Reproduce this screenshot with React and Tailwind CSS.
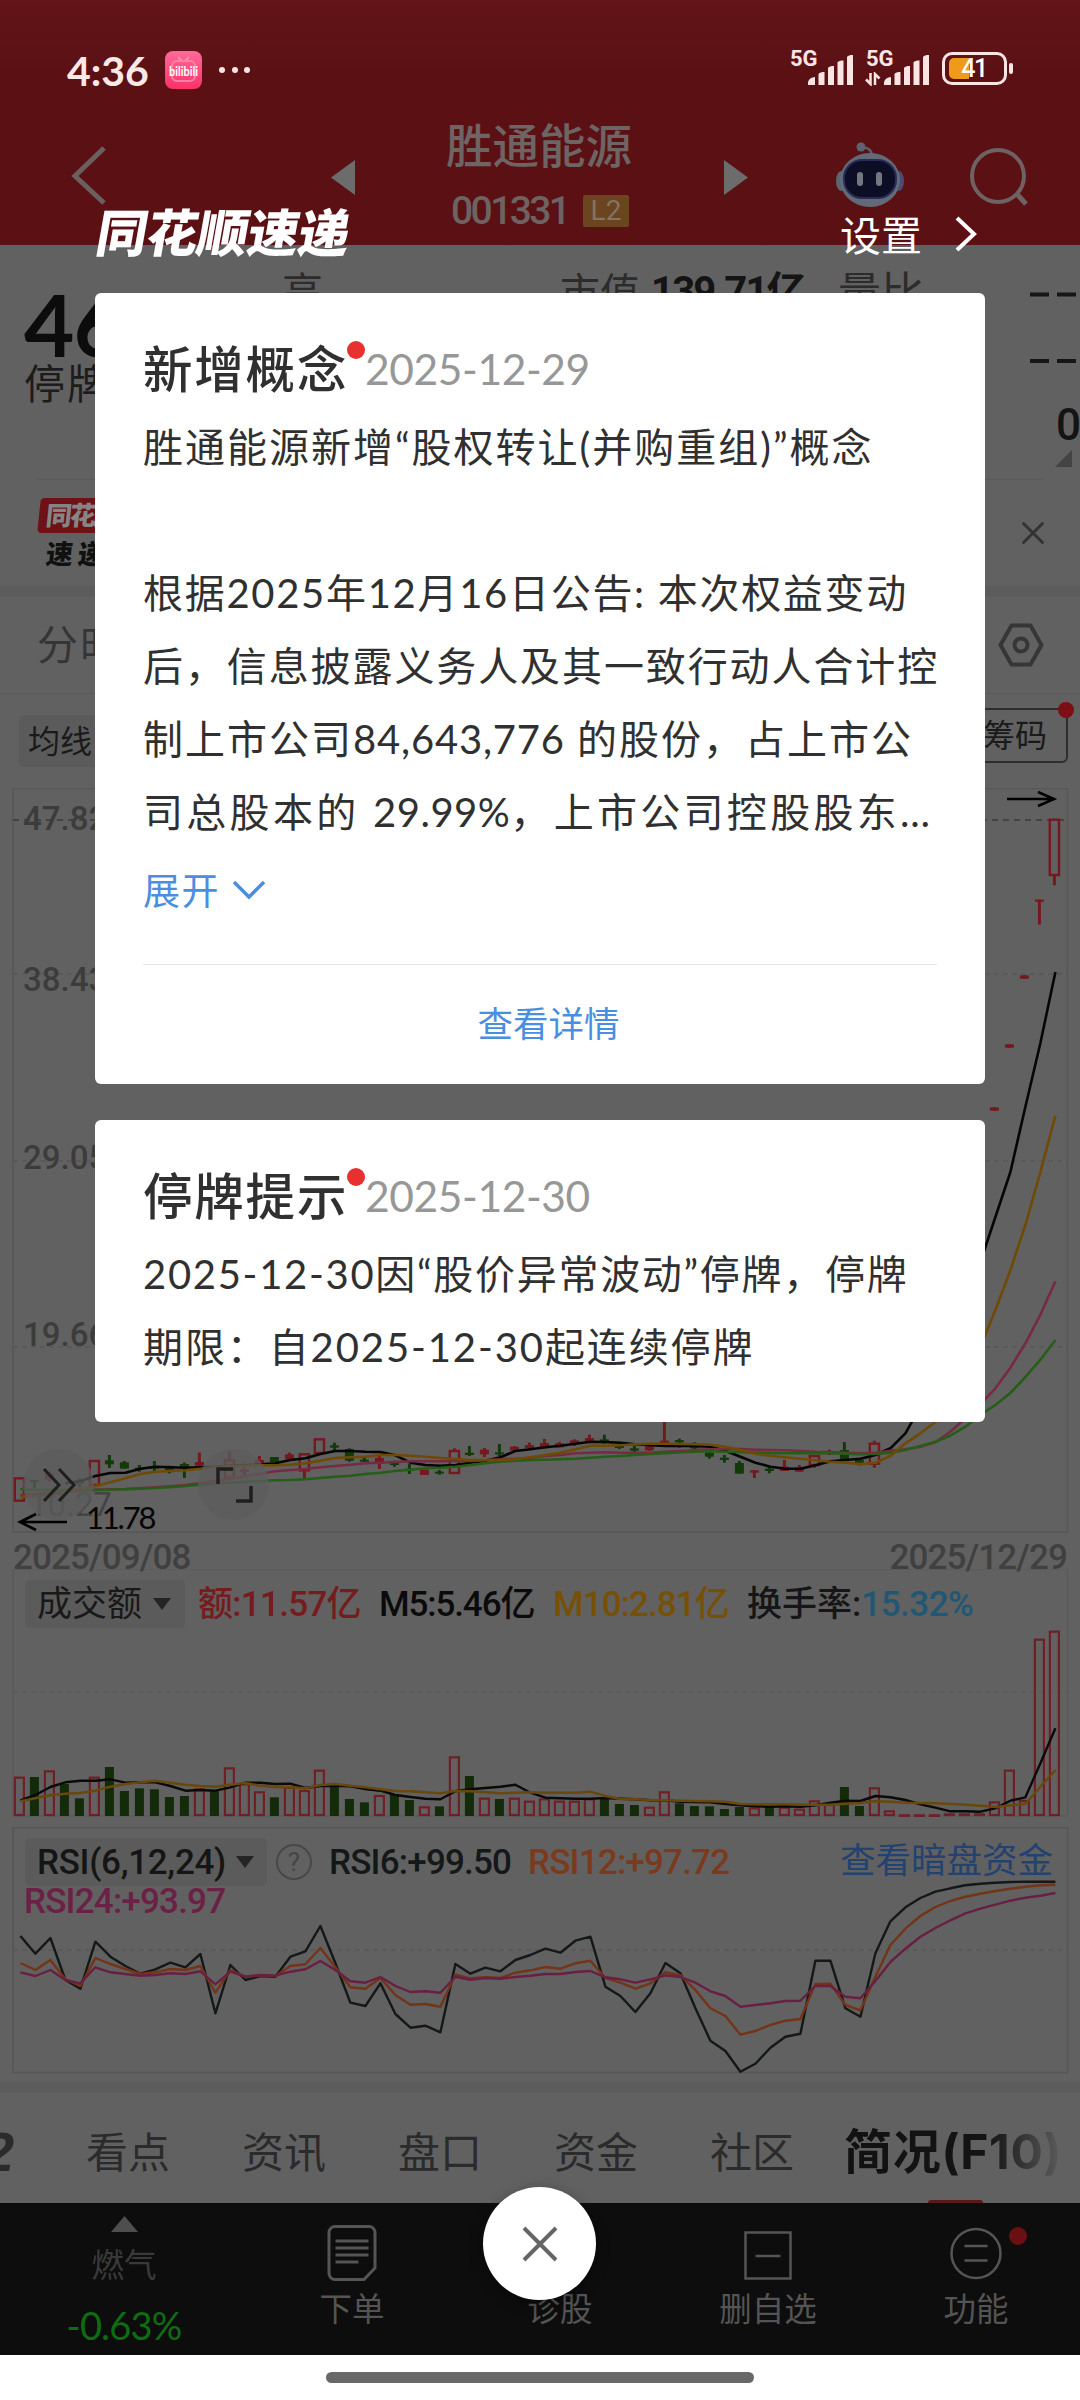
import { X } from "lucide-react";

const BAR_COUNT = 70;
const xAt = (i) => 19.4 + i * 15;

// All series below are stored in thirds of a pixel, relative to their panel base.
const MAIN_BASE = 1400;
const SUB_BASE = 1580;

const MA5 = [
  null, null, null, 250, 243, 228, 219, 218, 206, 200, 202, 203, 202, 200, 197, 196, 193, 190, 180, 175, 162, 153, 153,
  155, 156, 166, 188, 195, 197, 195, 188, 182, 172, 153, 148, 142, 137, 131, 125, 126, 128, 133, 136, 138, 138, 138,
  140, 152, 170, 188, 200, 206, 206, 196, 184, 180, 176, 165, 145, 100, 20, -80, -180, -290, -414, -549, -684, -880,
  -1071, -1284,
];
const MA10 = [
  292, 288, 282, 275, 268, 258, 247, 235, 222, 215, 213, 211, 206, 202, 198, 197, 196, 196, 194, 190, 182, 174, 172,
  170, 165, 165, 167, 170, 174, 177, 180, 180, 180, 178, 172, 165, 158, 148, 137, 137, 136, 133, 131, 131, 132, 133,
  134, 140, 150, 161, 167, 172, 176, 181, 185, 188, 192, 188, 168, 130, 100, 66, 15, -60, -160, -270, -390, -525,
  -684, -853,
];
const MA20 = [
  285, 282, 279, 276, 272, 269, 268, 267, 265, 262, 259, 255, 250, 243, 236, 229, 221, 214, 210, 207, 202, 198, 194,
  190, 188, 186, 184, 184, 184, 183, 183, 181, 178, 176, 173, 168, 165, 160, 158, 157, 158, 158, 158, 155, 153, 150,
  148, 146, 147, 149, 150, 151, 153, 155, 156, 158, 160, 158, 152, 148, 140, 127, 95, 55, 12, -35, -97, -170, -256,
  -356,
];
const MA60 = [
  268, 269, 270, 270, 270, 270, 269, 268, 266, 264, 262, 258, 254, 251, 248, 245, 243, 241, 240, 238, 234, 230, 227,
  222, 218, 213, 209, 205, 203, 200, 195, 190, 185, 182, 180, 179, 178, 176, 173, 170, 168, 165, 162, 160, 157, 155,
  154, 155, 156, 158, 159, 160, 160, 160, 160, 161, 163, 162, 158, 150, 138, 125, 107, 80, 45, 15, -21, -69, -121,
  -180,
];

// [index, kind, high, bodyTop, bodyBottom, low] where kind is r (up), R (up, hollow), g (down)
const CANDLES = [
  [0, "R", 232, 232, 305, 305], [1, "g", 240, 240, 246, 265], [2, "r", 215, 220, 238, 245], [4, "g", 235, 245, 250, 262],
  [5, "R", 180, 180, 258, 258], [6, "g", 165, 181, 193, 204], [7, "g", 183, 187, 206, 206], [8, "g", 195, 203, 207, 215],
  [9, "g", 183, 200, 206, 216], [10, "g", 197, 204, 208, 220], [11, "g", 188, 192, 204, 234], [12, "r", 158, 186, 197, 200],
  [14, "R", 155, 178, 236, 236], [15, "r", 190, 208, 216, 225], [16, "r", 168, 180, 192, 192], [17, "g", 171, 171, 186, 186],
  [18, "r", 158, 163, 178, 182], [19, "R", 160, 160, 214, 238], [20, "R", 115, 115, 162, 162], [21, "g", 128, 136, 143, 152],
  [22, "g", 145, 147, 182, 185], [23, "g", 172, 179, 183, 186], [24, "r", 168, 174, 192, 207], [25, "g", 182, 187, 195, 200],
  [26, "g", 192, 206, 211, 222], [27, "r", 209, 209, 225, 225], [28, "g", 210, 215, 220, 224], [29, "R", 145, 150, 222, 222],
  [30, "g", 138, 158, 165, 168], [31, "r", 144, 149, 163, 171], [32, "g", 132, 157, 163, 168], [33, "r", 138, 140, 152, 153],
  [34, "r", 128, 135, 144, 148], [35, "r", 117, 129, 142, 145], [36, "r", 126, 130, 142, 142], [37, "r", 118, 121, 132, 138],
  [38, "r", 104, 114, 123, 125], [39, "g", 104, 118, 128, 131], [40, "g", 134, 138, 144, 147], [41, "g", 138, 145, 152, 158],
  [42, "r", 137, 139, 151, 153], [43, "r", 45, 122, 130, 130], [44, "g", 116, 120, 127, 143], [45, "g", 127, 136, 145, 148],
  [46, "g", 152, 158, 170, 176], [47, "g", 165, 173, 180, 188], [48, "g", 183, 189, 221, 221], [49, "r", 210, 211, 218, 234],
  [50, "g", 198, 206, 213, 220], [51, "r", 180, 200, 213, 213], [52, "r", 195, 203, 215, 215], [53, "R", 165, 165, 198, 203],
  [54, "r", 149, 155, 163, 165], [55, "g", 126, 150, 180, 180], [56, "g", 175, 180, 191, 196], [57, "R", 122, 128, 194, 203],
  [65, "r", -878, -878, -868, -868], [66, "r", -1067, -1067, -1057, -1057], [67, "r", -1274, -1274, -1264, -1264],
  [68, "r", -1501, -1501, -1495, -1426], [69, "R", -1744, -1744, -1572, -1544],
];

const VOL_KINDS = "RGRGGRGGGGGGRGRRRGRRRGGGRGGRGRGRGRRRRRRGGGRRGGGGGRGRRRRGGRRRRRRRRRRRRR";
const VOL_TOPS = [
  590, 591, 571, 612, 655, 590, 561, 633, 625, 628, 651, 648, 625, 633, 562, 610, 634, 652, 620, 630, 569, 620, 657,
  667, 645, 643, 660, 679, 679, 529, 588, 653, 657, 653, 662, 655, 662, 662, 655, 655, 672, 675, 680, 634, 670, 678,
  679, 687, 681, 682, 681, 680, 686, 661, 672, 621, 678, 622, 691, 703, 703, 703, 700, 700, 700, 664, 569, 660, 176,
  152,
];
const VOL_M5 = [
  661, 645, 621, 607, 602, 602, 598, 608, 607, 607, 618, 632, 630, 632, 622, 608, 608, 612, 611, 624, 618, 617, 619,
  627, 632, 645, 651, 656, 658, 634, 628, 624, 620, 614, 638, 653, 655, 656, 656, 654, 656, 658, 661, 661, 665, 666,
  667, 672, 676, 679, 680, 679, 680, 676, 668, 662, 663, 648, 652, 660, 673, 683, 694, 694, 695, 685, 662, 652, 550,
  445,
];
const VOL_M10 = [
  664, 655, 646, 641, 639, 632, 620, 612, 607, 602, 608, 614, 618, 620, 614, 609, 617, 621, 622, 625, 615, 612, 617,
  622, 628, 633, 634, 637, 640, 633, 634, 637, 640, 638, 637, 638, 638, 638, 635, 648, 657, 658, 660, 661, 662, 663,
  664, 665, 672, 673, 673, 673, 674, 674, 674, 671, 669, 664, 665, 668, 669, 670, 672, 674, 677, 681, 676, 672, 620,
  570,
];

const RSI6 = [
  1068, 1121, 1074, 1200, 1226, 1085, 1130, 1158, 1181, 1168, 1148, 1162, 1122, 1300, 1155, 1200, 1188, 1190, 1130,
  1114, 1038, 1150, 1268, 1278, 1210, 1302, 1343, 1337, 1357, 1152, 1181, 1163, 1174, 1140, 1125, 1106, 1118, 1082,
  1070, 1220, 1248, 1296, 1240, 1149, 1180, 1285, 1382, 1413, 1475, 1451, 1403, 1370, 1361, 1142, 1142, 1285, 1310,
  1120, 1024, 982, 954, 935, 925, 916, 911, 908, 906, 905, 905, 905,
];
const RSI12 = [
  1149, 1170, 1140, 1198, 1218, 1134, 1152, 1167, 1182, 1177, 1167, 1170, 1158, 1238, 1170, 1190, 1186, 1188, 1158,
  1153, 1104, 1162, 1222, 1226, 1194, 1245, 1274, 1272, 1280, 1184, 1195, 1192, 1194, 1178, 1171, 1161, 1166, 1150,
  1142, 1194, 1208, 1226, 1210, 1177, 1186, 1230, 1285, 1308, 1364, 1353, 1335, 1322, 1317, 1212, 1211, 1275, 1291,
  1190, 1095, 1046, 1008, 981, 963, 950, 941, 933, 926, 920, 916, 914,
];
const RSI24 = [
  1177, 1188, 1170, 1200, 1210, 1162, 1177, 1182, 1187, 1185, 1180, 1182, 1174, 1213, 1175, 1190, 1185, 1187, 1175,
  1168, 1143, 1170, 1204, 1208, 1191, 1218, 1236, 1234, 1238, 1190, 1199, 1194, 1196, 1191, 1187, 1182, 1182, 1176,
  1173, 1192, 1198, 1208, 1198, 1186, 1191, 1208, 1234, 1248, 1280, 1275, 1270, 1263, 1262, 1218, 1218, 1250, 1255,
  1203, 1146, 1106, 1070, 1044, 1021, 1000, 986, 974, 962, 953, 947, 939,
];

const TABS = ["看点", "资讯", "盘口", "资金", "社区"];

function Series({ data, base, color, width = 2.4 }) {
  const points = data
    .map((v, i) => (v === null ? null : `${xAt(i) + 1},${(base + v / 3).toFixed(1)}`))
    .filter(Boolean)
    .join(" ");
  return <polyline points={points} fill="none" stroke={color} strokeWidth={width} strokeLinejoin="round" />;
}

function Candle({ row }) {
  const [i, kind, high, top, bottom, low] = row;
  const x = xAt(i);
  const y = (v) => MAIN_BASE + v / 3;
  const color = kind === "g" ? "#143a0b" : "#74191d";
  return (
    <g stroke={color} fill={color}>
      {kind === "R" ? (
        <>
          <rect x={x - 4.6} y={y(top) + 1} width={9.2} height={Math.max(y(bottom) - y(top) - 2, 2)} fill="none" strokeWidth={2.4} />
          <path d={`M${x} ${y(high)}V${y(top)}M${x} ${y(bottom)}V${y(low)}`} strokeWidth={3} />
        </>
      ) : (
        <>
          <rect x={x - 4.5} y={y(top)} width={9} height={Math.max(y(bottom) - y(top), 2)} stroke="none" />
          <path d={`M${x} ${y(high)}V${y(low)}`} strokeWidth={3} />
        </>
      )}
    </g>
  );
}

function SignalBars({ className }) {
  return (
    <svg className={className} width="46" height="32" viewBox="0 0 46 32" fill="#fbe4e4">
      <path d="M0 31v-3c1-3 3-4.500 7-5v8z" />
      <path d="M10.500 31V20c1-1.500 3-2 6-2v13z" />
      <path d="M20 31V14c1-1.500 3-2 6-2v19z" />
      <path d="M29.500 31V8.500c1-1.500 3-2 6-2V31z" />
      <path d="M39 31V3c1-1.500 3-2 6-2v30z" />
    </svg>
  );
}

function StatusBar() {
  return (
    <div className="flex h-[100px] items-end justify-between pr-[66px] pl-[67px]">
      <div className="flex h-[60px] items-center">
        <span className="w-[98px] font-['Lato'] text-[41px] leading-none font-bold text-[#fbe9e8]">4:36</span>
        <svg width="37" height="38" viewBox="0 0 37 38">
          <defs>
            <linearGradient id="bili" x1="0" y1="0" x2="0" y2="1">
              <stop offset="0" stopColor="#ff6a99" />
              <stop offset="1" stopColor="#fb3268" />
            </linearGradient>
          </defs>
          <rect width="37" height="38" rx="8" fill="url(#bili)" />
          <path d="M13 6l4 4M24 6l-4 4" stroke="#ff93b4" strokeWidth="2" />
          <rect x="7" y="10" width="23" height="20" rx="5" fill="none" stroke="#ff80a6" strokeWidth="2" />
          <text x="18.500" y="24.500" textAnchor="middle" fill="#fff" fontSize="13" fontWeight="700" fontFamily="Lato" textLength="29" lengthAdjust="spacingAndGlyphs">
            bilibili
          </text>
        </svg>
        <div className="ml-[17px] flex gap-[6.500px]">
          <i className="size-1.5 rounded-full bg-[#fbe4e4]" />
          <i className="size-1.5 rounded-full bg-[#fbe4e4]" />
          <i className="size-1.5 rounded-full bg-[#fbe4e4]" />
        </div>
      </div>
      <div className="flex h-[64px] items-center font-['Roboto'] font-bold text-[#fbe4e4]">
        <div className="relative h-[36px] w-[76px]">
          <span className="absolute top-[-1px] left-[-1px] text-[22px] leading-[19px]">5G</span>
          <SignalBars className="absolute bottom-0 left-[17px]" />
        </div>
        <div className="relative h-[36px] w-[75px]">
          <span className="absolute top-[-1px] left-[-1px] text-[22px] leading-[19px]">5G</span>
          <svg className="absolute bottom-0 left-[-2px]" width="16" height="14" viewBox="0 0 16 14" stroke="#fbe4e4" strokeWidth="2.500" fill="none">
            <path d="M5.500 1v11L1 7.500M10 13V2l4.500 4.500" />
          </svg>
          <SignalBars className="absolute bottom-0 left-[17px]" />
        </div>
        <div className="relative flex h-[33px] w-[65px] items-center justify-center rounded-[10px] border-[3px] border-[#fbe4e4]">
          <i className="absolute top-[3px] left-[4px] h-[21px] w-[20px] rounded-l-[5px] bg-[#f09a1c]" />
          <i className="absolute -right-[9px] h-[11px] w-[4px] rounded-full bg-[#fbe4e4]" />
          <span className="relative pr-[1px] text-[25px] leading-none font-medium tracking-[-1.500px] text-white">41</span>
        </div>
        <span className="w-[7px]" />
      </div>
    </div>
  );
}

function Robot() {
  return (
    <svg width="70" height="66" viewBox="0 0 70 66">
      <path d="M27 6c6-1 10 2 10 9" fill="none" stroke="#5a5f6c" strokeWidth="2.500" />
      <circle cx="26" cy="5" r="4.500" fill="#5b6273" />
      <ellipse cx="6" cy="39" rx="5" ry="10" fill="#596675" />
      <ellipse cx="64" cy="39" rx="5" ry="10" fill="#4b4b73" />
      <ellipse cx="35" cy="38" rx="30" ry="27" fill="#626a78" />
      <rect x="9" y="18" width="52" height="38" rx="18" fill="#0b0e25" stroke="#2a2c55" strokeWidth="2" />
      <rect x="22" y="30" width="6" height="14" rx="3" fill="#737880" />
      <rect x="41" y="30" width="6" height="14" rx="3" fill="#737880" />
    </svg>
  );
}

function Header() {
  return (
    <header className="h-[245px] shrink-0 bg-gradient-to-b from-[#621417] via-[#5b1114] via-30% to-[#5b1114]">
      <StatusBar />
      <div className="flex h-[145px] items-start text-[#6e6262]">
        <svg className="mt-[45px] ml-[70px]" width="38" height="62" viewBox="0 0 38 62" fill="none" stroke="#6c5f5f" strokeWidth="5">
          <path d="M34 3L5 31l29 27" />
        </svg>
        <svg className="mt-[60px] ml-[223px]" width="24" height="35" viewBox="0 0 24 35" fill="#6c6c6c">
          <path d="M0 17.500L24 0v35z" />
        </svg>
        <div className="ml-[80px] w-[210px] pt-[21px] pl-[11px]">
          <div className="text-[46.500px] leading-[48px] font-medium whitespace-nowrap text-[#6e6464]">胜通能源</div>
          <div className="mt-[16px] flex h-[52px] items-center">
            <span className="w-[137px] pl-[5px] font-['Roboto'] text-[39px] leading-none font-medium tracking-[-2.600px] text-[#6e6262]">001331</span>
            <span className="flex h-[32px] w-[46px] items-center justify-center rounded-[2px] bg-[#6b4420] font-['Roboto'] text-[28px] leading-none text-[#85725f]">
              L2
            </span>
          </div>
        </div>
        <svg className="mt-[60px] ml-[79px]" width="24" height="35" viewBox="0 0 24 35" fill="#6c6c6c">
          <path d="M24 17.500L0 0v35z" />
        </svg>
        <div className="mt-[42px] ml-[87px]">
          <Robot />
        </div>
        <svg className="mt-[46px] ml-[62px]" width="62" height="62" viewBox="0 0 62 62" fill="none" stroke="#6e6262" strokeWidth="4">
          <circle cx="31" cy="30" r="26" />
          <path d="M49 47l10 11" strokeWidth="5" />
        </svg>
      </div>
    </header>
  );
}

function Quote() {
  return (
    <section className="flex h-[234px] shrink-0 flex-col">
      <div className="flex h-[40px] shrink-0 pt-[27px] text-[41px] leading-[40px] whitespace-nowrap text-[#2c2c2c]">
        <span className="w-[560px] shrink-0 pl-[282px]">高</span>
        <span className="w-[91px] shrink-0 text-[40px]">市值</span>
        <b className="w-[187px] shrink-0 font-['Roboto','Noto_Sans_CJK_SC'] text-[40px] font-bold tracking-[-1.800px] text-[#141414]">139.71亿</b>
        <span className="w-[189px] shrink-0 text-[43px]">量比</span>
        <svg className="shrink-0" width="50" height="40" viewBox="0 0 50 40" fill="#161616">
          <path d="M3 20.500h19v4H3zM30 20.500h19v4H30z" />
        </svg>
      </div>
      <div className="flex h-[194px] justify-between pr-[3px]">
        <div className="w-[140px] pl-[24px]">
          <div className="-mt-[4px] h-[82px] font-['Lato'] text-[87px] leading-[86px] font-bold tracking-[-1px] text-[#0c0c0c]">46</div>
          <div className="text-[41px] leading-[41px] tracking-[2px] whitespace-nowrap text-[#1c1c1c]">停牌</div>
        </div>
        <svg width="50" height="154" viewBox="0 0 50 154" fill="#161616">
          <path d="M3 74h19v4H3zM30 74h19v4H30z" />
        </svg>
      </div>
    </section>
  );
}

function PriceSide() {
  return (
    <div className="absolute top-[400px] right-[2px] flex flex-col items-end">
      <span className="font-['Roboto'] text-[44px] leading-[50px] font-medium tracking-[-3px] text-[#141414]">0</span>
      <svg className="mr-[6px]" width="17" height="17" viewBox="0 0 17 17" fill="#444">
        <path d="M17 0v17H0z" />
      </svg>
    </div>
  );
}

function NewsStrip() {
  return (
    <section className="mx-[36px] flex h-[107px] shrink-0 items-center justify-between border-t border-[#5a5a5a]">
      <div className="w-[110px] pt-[1px] pl-[3px] font-black whitespace-nowrap">
        <div className="h-[35px] -skew-x-6 rounded-[4px] bg-[#6e1216] pl-[7px] text-[26px] leading-[34px] tracking-[-2px] text-[#858585]">
          同花顺
        </div>
        <div className="mt-[5px] -skew-x-6 pl-[7px] text-[27px] leading-[32px] tracking-[5px] text-[#111]">速递</div>
      </div>
      <X size={38} strokeWidth={1.8} color="#333" className="-mr-[8px]" />
    </section>
  );
}

function PeriodTabs() {
  return (
    <section className="flex h-[97px] shrink-0 items-center justify-between border-b border-[#595959] pr-[36px] pl-[37px]">
      <span className="text-[41px] tracking-[2px] text-[#353535]">分时</span>
      <svg width="46" height="44" viewBox="0 0 46 44" fill="none" stroke="#363636" strokeWidth="4">
        <path d="M13.500 2.500h19L43.500 22l-11 19.500h-19L2.500 22z" strokeLinejoin="round" />
        <circle cx="23" cy="22" r="6.500" />
      </svg>
    </section>
  );
}

function MainChart() {
  return (
    <>
      <div className="flex h-[94px] shrink-0 items-center justify-between pr-[12px] pl-[19px] text-[32px] text-[#1a1a1a]">
        <span className="flex h-[52px] w-[140px] items-center rounded-[6px] bg-[#5b5b5b] pl-[9px]">均线</span>
        <span className="relative -mt-[12px] flex h-[55px] w-[120px] items-center justify-end rounded-[6px] border-2 border-[#2e2e2e] pr-[19px] whitespace-nowrap">
          筹码
          <i className="absolute -top-[8px] -right-[8px] size-[16px] rounded-full bg-[#7c0f14]" />
        </span>
      </div>
      <div className="relative h-[745px] shrink-0">
        <svg className="block" width="1080" height="745" viewBox="0 788 1080 745">
          <rect x="13" y="788.500" width="1054.500" height="743.500" fill="none" stroke="#575757" strokeWidth="1.500" />
          <path d="M13 820h1054" stroke="#3d3b35" strokeWidth="1.500" strokeDasharray="6 5" />
          <path d="M13 974h1054M13 1161h1054M13 1347h1054" stroke="#575757" strokeWidth="1.500" strokeDasharray="5 4" />
          {CANDLES.map((row) => (
            <Candle key={row[0]} row={row} />
          ))}
          <Series data={MA5} base={MAIN_BASE} color="#060606" width={2.6} />
          <Series data={MA20} base={MAIN_BASE} color="#772b42" width={2.6} />
          <Series data={MA60} base={MAIN_BASE} color="#265e18" width={2.6} />
          <Series data={MA10} base={MAIN_BASE} color="#6f4a05" width={2.6} />
          <path d="M1007 799h46M1038 792l16 7-16 7" fill="none" stroke="#000" strokeWidth="2.600" />
          <path d="M20 1522h47M36 1514l-16 8 16 8" fill="none" stroke="#000" strokeWidth="2.600" />
        </svg>
        <div className="absolute inset-0 font-['Roboto'] text-[33px] leading-none font-medium text-[#3c3c3c]">
          <span className="absolute top-[14px] left-[23px]">47.82</span>
          <span className="absolute top-[175px] left-[23px]">38.43</span>
          <span className="absolute top-[353px] left-[23px]">29.05</span>
          <span className="absolute top-[530px] left-[23px]">19.66</span>
          <span className="absolute top-[700px] left-[29px] font-normal text-[#444]">10.27</span>
        </div>
        <span className="absolute top-[661px] left-[23px] flex size-[71px] items-center justify-center rounded-full bg-[#5c5c5c]/75">
          <svg width="36" height="38" viewBox="0 0 36 38" fill="none" stroke="#1f1f1f" strokeWidth="3">
            <path d="M3 3l15 16L3 35M18 3l15 16-15 16" />
          </svg>
        </span>
        <span className="absolute top-[661px] left-[198px] flex size-[71px] items-center justify-center rounded-full bg-[#5c5c5c]/75">
          <svg width="38" height="38" viewBox="0 0 38 38" fill="none" stroke="#1f1f1f" strokeWidth="3.500">
            <path d="M3 18V3h15M36 20v15H21" />
          </svg>
        </span>
        <span className="absolute top-[714px] left-[86px] font-['Lato'] text-[31px] leading-none tracking-[-2.200px] text-[#050505]">11.78</span>
      </div>
      <div className="flex h-[36px] shrink-0 items-end justify-between px-[13px] font-['Roboto'] text-[35px] leading-[24px] font-medium tracking-[-0.900px] text-[#404040]">
        <span className="relative z-10 -mb-[1px]">2025/09/08</span>
        <span className="relative z-10 -mb-[1px]">2025/12/29</span>
      </div>
    </>
  );
}

function Caret() {
  return (
    <svg width="18" height="12" viewBox="0 0 18 12" fill="#242424">
      <path d="M0 0h18L9 12z" />
    </svg>
  );
}

function VolumePanel() {
  const baseY = SUB_BASE + 708 / 3;
  return (
    <section className="relative h-[258px] shrink-0 font-['Roboto','Noto_Sans_CJK_SC'] text-[35px] leading-none">
      <svg className="absolute inset-0" width="1080" height="258" viewBox="0 1569 1080 258">
        <rect x="13" y="1569" width="1054.500" height="247" fill="none" stroke="#5a5a5a" strokeWidth="1.500" />
        <path d="M13 1692h1054" stroke="#595959" strokeWidth="1.500" strokeDasharray="5 4" />
        {Array.from({ length: BAR_COUNT }, (_, i) => {
          const x = xAt(i);
          const y = SUB_BASE + VOL_TOPS[i] / 3;
          return VOL_KINDS[i] === "G" ? (
            <rect key={i} x={x - 4.5} y={y} width={9} height={baseY - y} fill="#132b09" />
          ) : (
            <rect key={i} x={x - 4.5} y={y + 1} width={9} height={Math.max(baseY - y - 2, 0.5)} fill="none" stroke="#6e2025" strokeWidth={2.2} />
          );
        })}
        <Series data={VOL_M5} base={SUB_BASE} color="#0a0a0a" />
        <Series data={VOL_M10} base={SUB_BASE} color="#68480c" />
      </svg>
      <div className="relative flex items-center pt-[11px] whitespace-nowrap">
        <span className="ml-[25px] flex h-[48px] w-[160px] items-center justify-between rounded-[5px] bg-[#5b5b5b] pr-[14px] pl-[12px] text-[#191919]">
          成交额 <Caret />
        </span>
        <span className="ml-[13px] w-[181px] font-medium tracking-[-0.700px] text-[#761b1e]">额:11.57亿</span>
        <span className="w-[174px] font-medium tracking-[-1.100px] text-[#0b0b0b]">M5:5.46亿</span>
        <span className="w-[194px] font-medium tracking-[-0.900px] text-[#775006]">M10:2.81亿</span>
        <span className="font-medium text-[#161616]">换手率:</span>
        <span className="font-medium tracking-[-0.500px] text-[#205775]">15.32%</span>
      </div>
    </section>
  );
}

function RsiPanel() {
  return (
    <section className="relative h-[255px] shrink-0 font-['Roboto','Noto_Sans_CJK_SC'] text-[35px] leading-none">
      <svg className="absolute inset-0" width="1080" height="255" viewBox="0 1827 1080 255">
        <rect x="13" y="1827.500" width="1054.500" height="245" fill="none" stroke="#565656" strokeWidth="1.500" />
        <path d="M13 1950h1054" stroke="#575757" strokeWidth="1.500" strokeDasharray="5 4" />
        <Series data={RSI6} base={SUB_BASE} color="#141819" />
        <Series data={RSI12} base={SUB_BASE} color="#743417" />
        <Series data={RSI24} base={SUB_BASE} color="#691f42" />
      </svg>
      <div className="relative flex items-center pt-[11px] font-medium whitespace-nowrap">
        <span className="ml-[25px] flex h-[48px] w-[242px] items-center justify-between rounded-[5px] bg-[#5b5b5b] pr-[13px] pl-[12px] tracking-[-0.300px] text-[#151515]">
          RSI(6,12,24) <Caret />
        </span>
        <span className="ml-[9px] flex size-[36px] items-center justify-center rounded-full border-2 border-[#484848] text-[26px] font-normal text-[#444]">?</span>
        <span className="ml-[17px] w-[199px] tracking-[-0.800px] text-[#151819]">RSI6:+99.50</span>
        <span className="w-[312px] tracking-[-0.800px] text-[#7b3a1d]">RSI12:+97.72</span>
        <span className="text-[35.500px] font-normal text-[#24426f]">查看暗盘资金</span>
      </div>
      <div className="relative pl-[24px] leading-[32px] font-medium tracking-[-0.800px] text-[#6b2045]">RSI24:+93.97</div>
    </section>
  );
}

function SectionTabs() {
  return (
    <section className="relative flex h-[110px] shrink-0 items-center overflow-hidden pt-[8px] text-[42px] whitespace-nowrap text-[#2b2b2b]">
      <span className="-ml-[17px] w-[67px] font-['Liberation_Sans'] text-[56px] leading-none font-bold text-[#2b2b2b] italic">2</span>
      {TABS.map((t) => (
        <span key={t} className="w-[156px] text-center">
          {t}
        </span>
      ))}
      <span className="ml-[14px] bg-gradient-to-r from-[#111] via-[#141414] via-65% to-[#5c5c5c] bg-clip-text font-['Inter','Noto_Sans_CJK_SC'] text-[48px] font-bold tracking-[0.700px] text-transparent">
        简况(F10)
      </span>
      <i className="absolute right-[97px] bottom-0 h-[3px] w-[55px] rounded-t-[3px] bg-[#5c1719]" />
    </section>
  );
}

function NavItem({ icon, label }) {
  return (
    <div className="flex w-[208px] flex-col items-center">
      <div className="flex h-[88px] items-end justify-center pt-[20px] pb-[10px]">{icon}</div>
      <span className="text-[32.500px] leading-[36px] text-[#545454]">{label}</span>
    </div>
  );
}

function BottomNav() {
  return (
    <nav className="relative flex h-[152px] shrink-0 bg-[#0d0d0d]">
      <div className="flex w-[248px] flex-col items-center text-[32.500px]">
        <svg className="mt-[13px]" width="27" height="16" viewBox="0 0 27 16" fill="#4e4e4e">
          <path d="M13.500 0L27 16H0z" />
        </svg>
        <span className="mt-[15px] leading-[36px] text-[#393939]">燃气</span>
        <span className="mt-[23px] font-['Lato'] text-[38px] leading-[38px] tracking-[-0.800px] text-[#0e6d12]">-0.63%</span>
      </div>
      <NavItem
        label="下单"
        icon={
          <svg width="50" height="56" viewBox="0 0 50 56" fill="none" stroke="#555" strokeWidth="3">
            <path d="M8 1.500h34a6 6 0 016 6V43L37 54.500H8a6 6 0 01-6-6v-41a6 6 0 016-6z" />
            <path d="M8.500 16h33M8.500 23h33M8.500 30h33M8.500 37h23" />
          </svg>
        }
      />
      <NavItem label="诊股" icon={null} />
      <NavItem
        label="删自选"
        icon={
          <svg width="48" height="50" viewBox="0 0 48 50" fill="none" stroke="#555" strokeWidth="2.500">
            <path d="M1.500 1.500h45v46h-45zM11.500 25h25" />
          </svg>
        }
      />
      <NavItem
        label="功能"
        icon={
          <svg width="52" height="54" viewBox="0 0 52 54" fill="none" stroke="#555" strokeWidth="2.500">
            <circle cx="26" cy="26.500" r="24.500" />
            <path d="M14.500 19h23M14.500 33.500h23" />
          </svg>
        }
      />
      <i className="absolute top-[24px] right-[53px] size-[18px] rounded-full bg-[#6b1012]" />
    </nav>
  );
}

function CardTitle({ title, date }) {
  return (
    <div className="relative flex h-[52px] items-center whitespace-nowrap">
      <h2 className="w-[222px] text-[49.500px] leading-[52px] font-medium tracking-[1.800px] text-[#303030]">{title}</h2>
      <time className="text-[42.500px] leading-[50px] tracking-[-0.400px] text-[#979797]">{date}</time>
      <i className="absolute -top-[2px] left-[204px] size-[18px] rounded-full bg-[#e93030]" />
    </div>
  );
}

function NoticeDialog() {
  return (
    <div className="absolute inset-x-0 top-[205px] px-[95px] text-[40px]">
      <div className="flex h-[88px] items-start justify-between text-white">
        <span className="w-[253px] -skew-x-[10deg] pl-[2px] text-[51px] leading-[56px] font-black tracking-[-0.500px] whitespace-nowrap">同花顺速递</span>
        <span className="flex items-center pt-[7px] pr-[6px]">
          <span className="text-[41px] leading-[48px]">设置</span>
          <svg className="-mt-[5px] ml-[32px]" width="25" height="38" viewBox="0 0 25 38" fill="none" stroke="#fff" strokeWidth="4">
            <path d="M3 3l17 16L3 35" />
          </svg>
        </span>
      </div>

      <article className="h-[791px] rounded-[6px] bg-white px-[48px] pt-[50px]">
        <CardTitle title="新增概念" date="2025-12-29" />
        <div className="mt-[16px] text-[40px] leading-[73px] whitespace-nowrap text-[#303030]">
          <p className="tracking-[2px]">胜通能源新增“股权转让(并购重组)”概念</p>
          <p>&nbsp;</p>
          <p className="tracking-[1.700px]">根据2025年12月16日公告: 本次权益变动</p>
          <p className="tracking-[1.900px]">后，信息披露义务人及其一致行动人合计控</p>
          <p className="tracking-[2px]">
            制上市公司<span className="tracking-[0.800px]">84,643,776</span> 的股份，占上市公
          </p>
          <p className="tracking-[3.300px]">
            司总股本的 <span className="tracking-[0.500px]">29.99%</span>，上市公司控股股东…
          </p>
        </div>
        <button type="button" className="mt-[17px] flex h-[48px] items-center text-[37px] leading-none tracking-[1.500px] text-[#4a8ee0]">
          展开
          <svg className="ml-[12px]" width="34" height="20" viewBox="0 0 34 20" fill="none" stroke="#4a8ee0" strokeWidth="3.500">
            <path d="M2 2l15 15L32 2" />
          </svg>
        </button>
        <div className="mt-[50px] flex h-[119px] items-center justify-center border-t border-[#e6e6e6] pl-[17px] text-[35.500px] leading-none text-[#4a8ee0]">
          查看详情
        </div>
      </article>

      <article className="mt-[36px] h-[302px] rounded-[6px] bg-white px-[48px] pt-[50px]">
        <CardTitle title="停牌提示" date="2025-12-30" />
        <div className="mt-[16px] text-[40px] leading-[73px] whitespace-nowrap text-[#303030]">
          <p className="tracking-[1.700px]">2025-12-30因“股价异常波动”停牌，停牌</p>
          <p className="tracking-[1.900px]">期限：自2025-12-30起连续停牌</p>
        </div>
      </article>
    </div>
  );
}

export default function App() {
  return (
    <div className="relative flex h-[2400px] w-[1080px] flex-col overflow-hidden bg-[#616161] font-['Lato','Noto_Sans_CJK_SC',sans-serif]">
      <Header />
      <Quote />
      <PriceSide />
      <NewsStrip />
      <div className="h-[11px] shrink-0 bg-[#5c5c5c]" />
      <PeriodTabs />
      <MainChart />
      <VolumePanel />
      <RsiPanel />
      <div className="h-[11px] shrink-0 bg-[#5c5c5c]" />
      <SectionTabs />
      <BottomNav />
      <div className="flex h-[45px] shrink-0 justify-center bg-white pt-[17px]">
        <i className="h-[11px] w-[428px] rounded-full bg-[#686868]" />
      </div>
      <NoticeDialog />
      <button
        type="button"
        aria-label="关闭"
        className="absolute top-[2187px] left-[483px] flex size-[113px] items-center justify-center rounded-full bg-white shadow-[0_4px_14px_rgba(0,0,0,0.35)]"
      >
        <svg width="36" height="36" viewBox="0 0 36 36" stroke="#666" strokeWidth="4">
          <path d="M2 2l32 32M34 2L2 34" />
        </svg>
      </button>
    </div>
  );
}
